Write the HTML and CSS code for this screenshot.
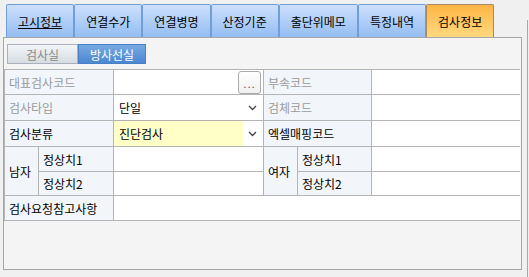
FILE: index.html
```html
<!DOCTYPE html>
<html lang="ko">
<head>
<meta charset="UTF-8">
<meta name="viewport" content="width=device-width, initial-scale=1.0">
<title>검사정보</title>
<link rel="stylesheet" href="styles.css">
</head>
<body>
<div class="window">
  <div class="main">
    <ul class="tabs">
      <li class="tab"><u>고시정보</u></li>
      <li class="tab">연결수가</li>
      <li class="tab">연결병명</li>
      <li class="tab">산정기준</li>
      <li class="tab">출단위메모</li>
      <li class="tab">특정내역</li>
      <li class="tab active">검사정보</li>
    </ul>

    <div class="panel">
      <div class="subtabs">
        <span class="subtab">검사실</span>
        <span class="subtab on">방사선실</span>
      </div>

      <div class="form">
        <div class="lbl dim span2">대표검사코드</div>
        <div class="val code"><button class="dots">...</button></div>
        <div class="lbl dim span2">부속코드</div>
        <div class="val"></div>

        <div class="lbl dim span2">검사타입</div>
        <div class="val select">
          <span class="sel-text">단일</span>
          <svg class="chev" width="9" height="6" viewBox="0 0 9 6"><polyline points="1,1 4.5,4.5 8,1" fill="none" stroke="#444" stroke-width="1.3"/></svg>
        </div>
        <div class="lbl dim span2">검체코드</div>
        <div class="val"></div>

        <div class="lbl span2">검사분류</div>
        <div class="val select">
          <span class="sel-text hl">진단검사</span>
          <svg class="chev" width="9" height="6" viewBox="0 0 9 6"><polyline points="1,1 4.5,4.5 8,1" fill="none" stroke="#444" stroke-width="1.3"/></svg>
        </div>
        <div class="lbl span2">엑셀매핑코드</div>
        <div class="val"></div>

        <div class="lbl rows2">남자</div>
        <div class="lbl">정상치1</div>
        <div class="val"></div>
        <div class="lbl rows2">여자</div>
        <div class="lbl">정상치1</div>
        <div class="val"></div>

        <div class="lbl">정상치2</div>
        <div class="val"></div>
        <div class="lbl">정상치2</div>
        <div class="val"></div>

        <div class="lbl span2">검사요청참고사항</div>
        <div class="val span4"></div>
      </div>
    </div>
  </div>
  <div class="side"></div>
</div>
</body>
</html>
```

FILE: styles.css
```css
body {
    margin: 0;
    padding: 0;
    font-family: "Noto Sans CJK KR", "Noto Sans", sans-serif;
    font-size: 12px;
    background-color: #f0f0f0;
    color: #000;
  }

  .window {
    display: flex;
    height: 277px;
  }

  .main {
    width: 523px;
  }

  .side {
    margin-left: 4px;
    margin-top: 20px;
    border-left: 1px solid #a8a8a8;
    flex: 1;
  }

  /* top tab strip */
  .tabs {
    display: flex;
    list-style: none;
    margin: 4px 0 0 6px;
    padding: 0;
    height: 33px;
  }

  .tab {
    display: flex;
    align-items: center;
    padding: 0 11px;
    font-size: 12px;
    border: 1px solid #6f9fd9;
    border-bottom: none;
    border-radius: 2px 2px 0 0;
    background: linear-gradient(#cde0fd, #94bdf2);
  }

  .tab.active {
    border-color: #a48a64;
    background: linear-gradient(#ffb445, #ffd97e);
  }

  .panel {
    box-sizing: border-box;
    margin-left: 3px;
    width: 519px;
    height: 233px;
    border: 1px solid #a6a6a6;
    background-color: #f4f4f4;
    padding-top: 6px;
  }

  /* 검사실 / 방사선실 toggle */
  .subtabs {
    display: flex;
    margin-left: 3px;
    height: 20px;
  }

  .subtab {
    box-sizing: border-box;
    width: 71px;
    display: flex;
    align-items: center;
    justify-content: center;
    color: #8a8a8a;
    border: 1px solid #a9b2bc;
    background: linear-gradient(#f3f5f7, #d6dce2);
  }

  .subtab.on {
    width: 68px;
    color: #fff;
    border-color: #4a80c6;
    background: linear-gradient(#78a9e2, #4b87d0);
  }

  /* form grid */
  .form {
    display: grid;
    grid-template-columns: 33px 74px 149px 33px 73px 148px;
    grid-template-rows: 24px 25px 25px 24px 23px 24px;
    gap: 1px;
    padding: 1px 0 1px 1px;
    margin-top: 5px;
    width: 516px;
    box-sizing: border-box;
    background-color: #b4b4b4;
  }

  .lbl {
    display: flex;
    align-items: center;
    padding-left: 4px;
    background-color: #f2f6fa;
    white-space: nowrap;
  }

  .lbl.dim {
    color: #9a9a9a;
  }

  .span2 {
    grid-column: span 2;
  }

  .span4 {
    grid-column: span 4;
  }

  .rows2 {
    grid-row: span 2;
  }

  .val {
    background-color: #fff;
  }

  .code {
    display: flex;
    justify-content: flex-end;
    align-items: center;
    padding-right: 2px;
  }

  .dots {
    width: 23px;
    height: 23px;
    padding: 0 0 3px;
    border: 1px solid #ababab;
    border-radius: 3px;
    background: linear-gradient(#ffffff, #f0f0f0);
    color: #3a4a66;
    font-family: "DejaVu Sans", sans-serif;
    font-size: 10px;
    line-height: 1;
    display: flex;
    align-items: flex-end;
    justify-content: center;
    letter-spacing: 1px;
  }

  .select {
    display: flex;
    align-items: center;
  }

  .sel-text {
    width: 129px;
    height: 100%;
    display: flex;
    align-items: center;
    padding-left: 5px;
    box-sizing: border-box;
  }

  .sel-text.hl {
    background-color: #ffffc8;
  }

  .chev {
    margin-left: 5px;
  }
```
